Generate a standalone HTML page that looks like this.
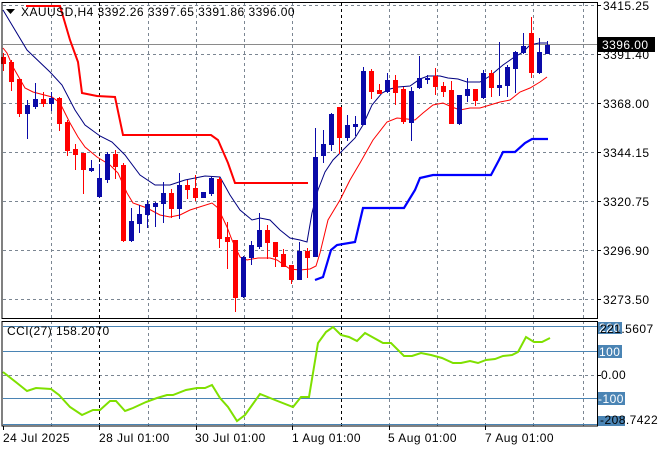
<!DOCTYPE html>
<html><head><meta charset="utf-8"><style>
html,body{margin:0;padding:0;background:#fff;width:660px;height:450px;overflow:hidden}
svg{display:block;font-family:"Liberation Sans","DejaVu Sans",sans-serif;font-size:12px;letter-spacing:0.45px}
</style></head><body>
<svg id="s" width="660" height="450" viewBox="0 0 660 450" xmlns="http://www.w3.org/2000/svg">
<rect width="660" height="450" fill="#fff"/>
<g stroke="#7b8692" stroke-width="1" stroke-dasharray="3,3" fill="none">
<path d="M3 5.5H597M3 54.5H597M3 103.5H597M3 152.5H597M3 201.5H597M3 250.5H597M3 299.5H597M3 375.5H597"/>
<path d="M51.5 3V318M148.5 3V318M196.5 3V318M244.5 3V318M292.5 3V318M389.5 3V318M437.5 3V318M485.5 3V318M533.5 3V318M583.5 3V318"/>
<path d="M51.5 321V426M148.5 321V426M196.5 321V426M244.5 321V426M292.5 321V426M389.5 321V426M437.5 321V426M485.5 321V426M533.5 321V426M583.5 321V426"/>
</g>
<g stroke="#000" stroke-dasharray="3,3"><path d="M99.5 3V318M341.5 3V318M99.5 321V426M341.5 321V426"/></g>
<path d="M3 44.5H597" stroke="#8a8a8a"/>
<path d="M26 6L60 6L70 40L78 62L82 93L97 96L115 97L123 135L211 135L218 140L228 163L235 183L308 183" stroke="#ff0000" stroke-width="2" fill="none"/>
<path d="M315 280L323 277L331 250L337 245L355 242L363 208L404 208L415 190L420 178L433 175L491 175L499 160L503 152L515 152L525 143L532 139L548 139" stroke="#0000ff" stroke-width="2.2" fill="none"/>
<path d="M3 10L27 50L50 72L62 85L75 110L85 125L100 136L112 142L125 155L140 175L155 185L170 185L185 180L205 176L220 177L230 195L240 210L252 220L260 218L270 220L280 230L290 238L300 240L307 242L312 213L318 190L325 172L333 160L340 153L355 138L363 125L372 105L382 93L390 89L398 87L410 86L420 79L428 76L440 76L448 78L458 79L467 82L480 82L490 76L497 70L503 65L513 58L523 52L530 45L539 43L548 43" stroke="#000080" fill="none"/>
<path d="M3 48L7 53L13 67L25 88L33 92L52 97L60 103L70 123L78 137L85 147L97 157L110 165L118 173L127 193L133 203L147 208L160 215L170 217L180 215L190 210L212 203L218 208L227 227L232 240L240 257L247 260L258 258L270 258L277 260L290 269L300 270L310 269L316 266L320 253L328 220L340 200L350 180L360 163L373 140L387 122L397 118L407 119L415 120L423 113L433 105L443 103L452 107L460 110L470 108L480 108L490 105L500 102L510 100L520 92L530 88L540 82L547 77" stroke="#ff0000" fill="none"/>
<g id="c"></g>
<rect x="2" y="2.5" width="595.5" height="316" fill="none" stroke="#000"/>
<rect x="2" y="321.5" width="595.5" height="104.5" fill="none" stroke="#000"/>
<g stroke="#4a84b4"><path d="M3 326.5H597M3 351.5H597M3 398.5H597M3 424.5H597"/></g>
<path d="M3 372L17 383L27 391L36 388L51 389L59 395L70 407L82 415L93 410L100 410L110 401L116 401L125 411L133 408L146 402L157 398L167 395L173 395L186 390L197 388L205 388L212 385L220 398L228 407L237 421L245 415L260 394L275 400L293 407L301 397L309 397L318 343L326 332L333 327L341 335L349 337L357 341L365 333L374 338L383 343L391 343L404 356L412 356L421 353L431 355L442 358L453 363L461 363L470 361L478 363L486 360L495 359L503 356L512 355L518 352L526 337L534 342L542 342L550 338" stroke="#7fe000" stroke-width="2" fill="none"/>
<g stroke="#000"><path d="M597 5.5H601M597 54.5H601M597 103.5H601M597 152.5H601M597 201.5H601M597 250.5H601M597 299.5H601M597 375.5H601"/>
<path d="M99.5 426V430M196.5 426V430M292.5 426V430M389.5 426V430M485.5 426V430M3.5 426V430"/></g>
<g fill="#000">
<text x="603" y="10">3415.25</text>
<text x="603" y="59">3391.40</text>
<text x="603" y="108">3368.00</text>
<text x="603" y="157">3344.15</text>
<text x="603" y="206">3320.75</text>
<text x="603" y="255">3296.90</text>
<text x="603" y="304">3273.50</text>
</g>
<rect x="598" y="37" width="57" height="15" fill="#000"/>
<text x="602" y="49" fill="#fff">3396.00</text>
<rect x="598" y="322" width="24" height="12" fill="#4a84b4"/>
<text x="599" y="332" fill="#fff">220</text>
<text x="600" y="333" fill="#000">221.5607</text>
<rect x="598" y="345" width="24" height="13" fill="#4a84b4"/>
<text x="599" y="356" fill="#fff">100</text>
<text x="601" y="379" fill="#000">0.00</text>
<rect x="598" y="392" width="27" height="13" fill="#4a84b4"/>
<text x="598" y="403" fill="#fff">-100</text>
<rect x="598" y="416" width="27" height="10" fill="#4a84b4"/>
<text x="600" y="424" fill="#000">-208.7422</text>
<text x="21" y="16" fill="#000">XAUUSD,H4  3392.26 3397.65 3391.86 3396.00</text>
<path d="M6 9H15L10.5 14Z" fill="#000"/>
<text x="7" y="335" fill="#000">CCI(27) 158.2070</text>
<g fill="#000">
<text x="3" y="442">24 Jul 2025</text>
<text x="99" y="442">28 Jul 01:00</text>
<text x="195" y="442">30 Jul 01:00</text>
<text x="292" y="442">1 Aug 01:00</text>
<text x="388" y="442">5 Aug 01:00</text>
<text x="485" y="442">7 Aug 01:00</text>
</g>
</svg>
<script>
var d=[["r",57,63,53,70],["r",62,81,60,90],["r",79,113,79,116],["b",105,113,100,138],["b",99,106,83,108],["r",99,103,92,106],["b",98,103,92,110],["r",98,123,97,130],["r",122,150,120,155],["r",149,154,144,169],["r",153,169,153,193],["b",168,170,160,171],["b",178,196,164,197],["b",154,179,152,182],["r",154,166,150,178],["r",165,240,163,241],["b",221,240,208,241],["b",214,223,205,232],["b",204,214,200,227],["b",203,206,202,226],["b",193,203,182,222],["r",193,208,189,217],["b",185,208,173,218],["r",185,189,180,198],["r",188,197,175,200],["b",192,197,192,197],["b",178,193,177,195],["r",179,238,177,247],["r",237,241,222,268],["r",240,297,240,311],["b",257,296,256,297],["b",245,257,241,264],["b",230,246,213,248],["r",230,242,225,258],["r",242,256,242,266],["r",254,266,249,266],["r",265,279,265,283],["b",251,279,242,279],["r",251,257,248,277],["b",157,256,128,256],["b",144,155,130,162],["b",114,144,113,150],["r",107,137,107,153],["b",125,137,115,140],["b",124,126,116,135],["b",71,124,67,124],["r",71,91,69,98],["r",90,93,84,93],["b",80,91,73,92],["r",80,92,75,104],["r",89,121,87,123],["b",91,122,87,140],["b",78,87,56,88],["b",78,79,75,83],["r",76,86,68,94],["r",86,91,82,96],["r",90,123,81,123],["b",95,123,95,124],["b",89,95,78,101],["r",89,100,89,105],["b",73,97,70,98],["r",73,87,70,96],["b",85,87,42,95],["b",67,85,65,96],["b",52,68,51,92],["b",46,52,33,53],["r",33,72,17,77],["b",52,72,38,73],["b",45,53,41,53]];
var s="";for(var k=0;k<d.length;k++){var c=d[k],x=3+8*k,col=c[0]=="r"?"#ff0000":"#0a0aa8";
s+='<rect x="'+x+'" y="'+c[3]+'" width="1" height="'+(c[4]-c[3]+1)+'" fill="'+col+'"/>';
s+='<rect x="'+(x-2)+'" y="'+c[1]+'" width="5" height="'+Math.max(2,c[2]-c[1]+1)+'" fill="'+col+'"/>';}
document.getElementById("c").innerHTML=s;
</script>
</body></html>
